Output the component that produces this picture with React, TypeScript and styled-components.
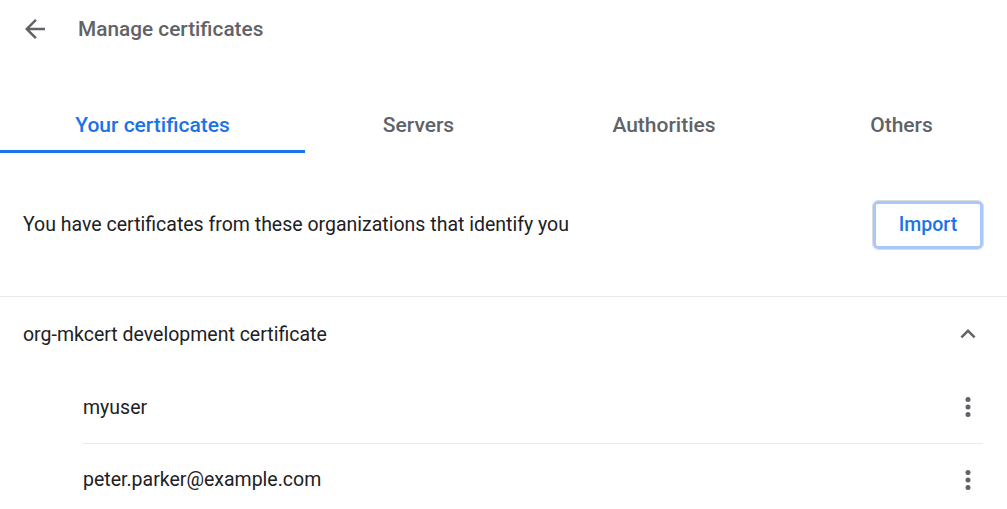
import React from "react";
import styled, { createGlobalStyle } from "styled-components";

const Global = createGlobalStyle`
  html, body { margin: 0; padding: 0; background: #fff; }
  body { font-family: Roboto, "Liberation Sans", sans-serif; color: #202124; }
  * { box-sizing: border-box; }
`;

const Page = styled.div`
  width: 1007px;
  height: 509px;
  overflow: hidden;
  display: flex;
  flex-direction: column;
  & > * { flex-shrink: 0; }
`;

const Header = styled.header`
  height: 56px;
  display: flex;
  align-items: center;
  padding: 2px 0 0 20px;
  gap: 28px;
`;

const IconButton = styled.button`
  width: 30px;
  height: 30px;
  padding: 0;
  border: none;
  background: none;
  display: flex;
  align-items: center;
  justify-content: center;
  color: #5f6368;
`;

const Title = styled.h1`
  margin: 0;
  font-size: 20.8px;
  font-weight: 500;
  color: #5f6368;
`;

const TabBar = styled.nav`
  margin-top: 41px;
  display: flex;
`;

const Tab = styled.div<{ $w: number; $active?: boolean }>`
  width: ${(p) => p.$w}px;
  height: 56px;
  padding-top: 3px;
  display: flex;
  align-items: center;
  justify-content: center;
  font-size: 21px;
  font-weight: 500;
  color: ${(p) => (p.$active ? "#1a73e8" : "#5f6368")};
  border-bottom: 3px solid ${(p) => (p.$active ? "#1a73e8" : "transparent")};
`;

const IntroRow = styled.section`
  height: 144px;
  display: flex;
  align-items: center;
  justify-content: space-between;
  padding: 0 23px;
  border-bottom: 1px solid #e8eaed;
`;

const BodyText = styled.span`
  font-size: 19.5px;
  color: #202124;
`;

const ImportButton = styled.button`
  width: 112px;
  height: 50px;
  border-radius: 6px;
  border: 1px solid #dadce0;
  box-shadow: 0 0 0 3px #a8c7fa inset;
  background: #fff;
  color: #1a73e8;
  font-family: inherit;
  font-size: 19.5px;
  font-weight: 500;
`;

const OrgRow = styled.div`
  height: 74px;
  display: flex;
  align-items: center;
  justify-content: space-between;
  padding: 0 24px 0 23px;
`;

const CertList = styled.div`
  display: flex;
  flex-direction: column;
  padding: 0 24px 0 83px;
`;

const CertRow = styled.div<{ $divider?: boolean }>`
  height: 72px;
  flex-shrink: 0;
  display: flex;
  align-items: center;
  justify-content: space-between;
  border-top: ${(p) => (p.$divider ? "1px solid #e8eaed" : "none")};
`;

const ArrowBack = () => (
  <svg width="30" height="30" viewBox="0 0 24 24" fill="currentColor">
    <path d="M20 11H7.83l5.59-5.59L12 4l-8 8 8 8 1.41-1.41L7.83 13H20v-2z" />
  </svg>
);

const ExpandLess = () => (
  <svg width="30" height="30" viewBox="0 0 24 24" fill="currentColor">
    <path d="M12 8l-6 6 1.41 1.41L12 10.83l4.59 4.58L18 14z" />
  </svg>
);

const MoreVert = () => (
  <svg width="30" height="30" viewBox="0 0 24 24" fill="currentColor">
    <circle cx="12" cy="6" r="2" />
    <circle cx="12" cy="12" r="2" />
    <circle cx="12" cy="18" r="2" />
  </svg>
);

const tabs = [
  { label: "Your certificates", w: 305, active: true },
  { label: "Servers", w: 227 },
  { label: "Authorities", w: 264 },
  { label: "Others", w: 211 },
];

const certs = ["myuser", "peter.parker@example.com"];

export default function App() {
  return (
    <Page>
      <Global />
      <Header>
        <IconButton aria-label="Back">
          <ArrowBack />
        </IconButton>
        <Title>Manage certificates</Title>
      </Header>
      <TabBar>
        {tabs.map((t) => (
          <Tab key={t.label} $w={t.w} $active={t.active}>
            {t.label}
          </Tab>
        ))}
      </TabBar>
      <IntroRow>
        <BodyText>You have certificates from these organizations that identify you</BodyText>
        <ImportButton>Import</ImportButton>
      </IntroRow>
      <OrgRow>
        <BodyText>org-mkcert development certificate</BodyText>
        <IconButton aria-label="Collapse">
          <ExpandLess />
        </IconButton>
      </OrgRow>
      <CertList>
        {certs.map((c, i) => (
          <CertRow key={c} $divider={i > 0}>
            <BodyText>{c}</BodyText>
            <IconButton aria-label="More actions">
              <MoreVert />
            </IconButton>
          </CertRow>
        ))}
      </CertList>
    </Page>
  );
}
